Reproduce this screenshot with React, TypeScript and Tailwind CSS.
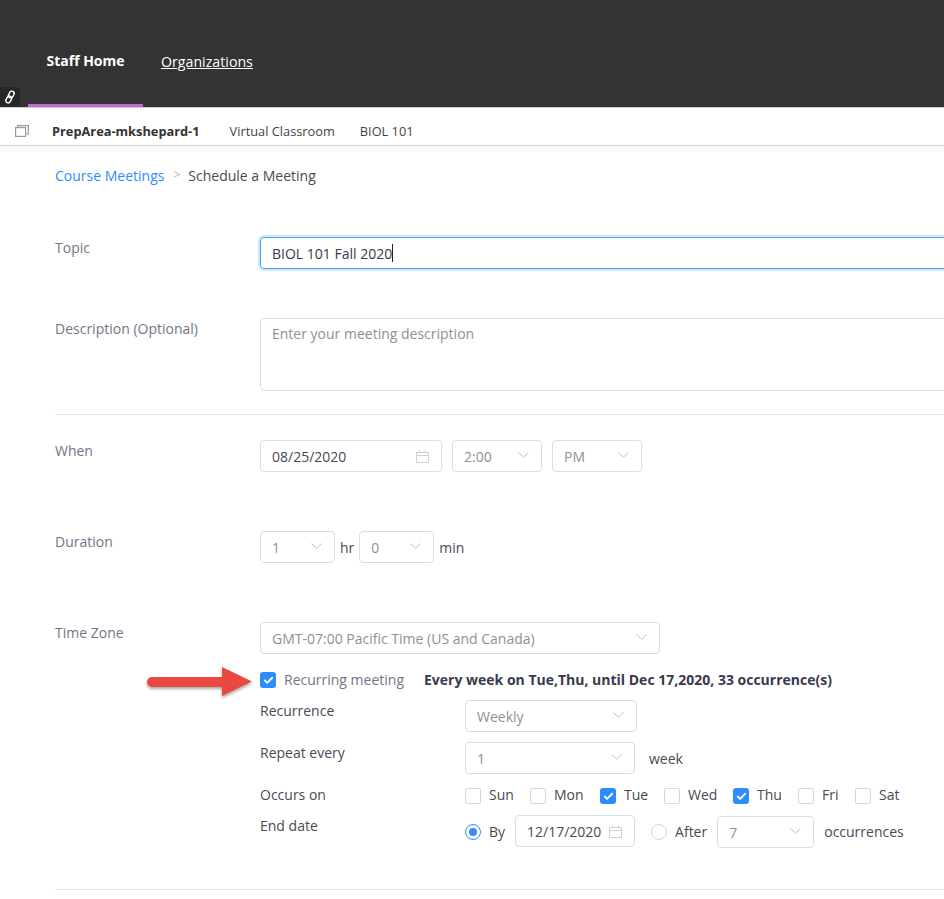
import React from 'react';
import { Check } from 'lucide-react';

const Calendar = () => (
  <svg width="13" height="13" viewBox="0 0 13 13" fill="none" stroke="#d0d0d6" strokeWidth="1" className="shrink-0">
    <rect x="0.5" y="2.5" width="12" height="10" />
    <path d="M0.5 5.5H12.5M3.5 0.5V3M9.5 0.5V3" />
  </svg>
);

const Chevron = () => (
  <svg width="11" height="6" viewBox="0 0 11 6" fill="none" stroke="#c0c0c8" strokeWidth="1" className="mb-[2px] shrink-0">
    <path d="M0.5 0.5L5.5 5.2L10.5 0.5" />
  </svg>
);

const Select = ({ value, className }: { value: string; className: string }) => (
  <div className={`flex h-8 shrink-0 items-center justify-between rounded border border-[#dcdce0] bg-white pl-[11px] pr-3 text-[14px] text-[#8f8f98] ${className}`}>
    <span>{value}</span>
    <Chevron />
  </div>
);

const Box = ({ checked }: { checked?: boolean }) =>
  checked ? (
    <span className="flex h-4 w-4 shrink-0 items-center justify-center rounded-[3px] bg-[#2d8cff]">
      <Check size={11} strokeWidth={4} className="text-white" />
    </span>
  ) : (
    <span className="h-4 w-4 shrink-0 rounded-[2px] border border-[#d8d8dc] bg-white" />
  );

const Day = ({ label, checked, className }: { label: string; checked?: boolean; className: string }) => (
  <div className={`flex shrink-0 items-center gap-2 ${className}`}>
    <Box checked={checked} />
    <span className="mb-[3px]">{label}</span>
  </div>
);

export default function App() {
  return (
    <div className="relative h-[899px] w-[944px] overflow-hidden bg-white text-[14px] text-[#4a4a55] [font-family:'Open_Sans',sans-serif]">
      <header className="relative h-[108px] border-b border-[#cfcfcf] bg-[#333333]">
        <nav className="flex h-[107px] items-end pl-7">
          <div className="flex h-[107px] w-[115px] items-center justify-center border-b-[3px] border-[#c667d8] pt-[16px] text-[14px] font-bold text-white">
            Staff Home
          </div>
          <a className="ml-[18px] flex h-[107px] items-center pt-[16px] text-[14.2px] text-white underline">Organizations</a>
        </nav>
        <div className="absolute bottom-0 left-0 flex h-5 w-5 items-center justify-center rounded-tr bg-[#262626]">
          <svg width="12" height="14" viewBox="0 0 12 14" fill="none" stroke="white" strokeWidth="1.5">
            <rect x="5" y="1" width="4.6" height="7" rx="2.3" transform="rotate(28 7.3 4.5)" />
            <rect x="2.4" y="6" width="4.6" height="7" rx="2.3" transform="rotate(28 4.7 9.5)" />
          </svg>
        </div>
      </header>

      <div className="flex h-[38px] items-center border-b border-[#d0d0d0] pl-[15px] text-[12.8px]">
        <svg width="14" height="12" viewBox="0 0 14 12" fill="none" stroke="#999999" strokeWidth="1.2" className="mt-[9px]">
          <rect x="0.6" y="2.6" width="10" height="8.8" />
          <path d="M2.6 2.6V0.6H13.4V9H10.6" />
        </svg>
        <span className="ml-[23px] pt-[10px] font-bold text-[#333]">PrepArea-mkshepard-1</span>
        <span className="ml-[30px] pt-[10px] text-[#444]">Virtual Classroom</span>
        <span className="ml-[25px] pt-[10px] text-[#444]">BIOL 101</span>
      </div>
      <div className="h-[6px] bg-[#f8f8f8]" />

      <main className="pl-[55px]">
        <div className="mt-[13px] flex h-5 items-center">
          <a className="text-[#2d8cff]">Course Meetings</a>
          <span className="ml-[9px] text-[12px] text-[#b5b5bb]">&gt;</span>
          <span className="ml-[8px]">Schedule a Meeting</span>
        </div>

        <div className="mt-[52px] flex">
          <label className="w-[205px] shrink-0 text-[#747487]">Topic</label>
          <div className="flex h-8 w-[800px] shrink-0 items-center rounded border border-[#4aa3ff] pl-[11px] text-[#39394d] ring-2 ring-[#cfe6ff]">
            BIOL 101 Fall 2020<span className="h-[18px] w-px bg-[#222]" />
          </div>
        </div>

        <div className="mt-[49px] flex">
          <label className="w-[205px] shrink-0 text-[#747487]">Description (Optional)</label>
          <div className="h-[73px] w-[800px] shrink-0 rounded border border-[#dcdce0] pl-[11px] pt-1 text-[#8f8f98]">
            Enter your meeting description
          </div>
        </div>

        <div className="mt-[23px] h-px bg-[#e4e4e8]" />

        <div className="mt-[25px] flex">
          <label className="w-[205px] shrink-0 text-[#747487]">When</label>
          <div className="flex gap-[10px]">
            <div className="flex h-8 w-[182px] items-center justify-between rounded border border-[#dcdce0] pl-[11px] pr-3 text-[#4a4a55]">
              <span>08/25/2020</span>
              <Calendar />
            </div>
            <Select value="2:00" className="w-[90px]" />
            <Select value="PM" className="w-[90px]" />
          </div>
        </div>

        <div className="mt-[59px] flex">
          <label className="w-[205px] shrink-0 text-[#747487]">Duration</label>
          <div className="flex items-center">
            <Select value="1" className="w-[75px]" />
            <span className="ml-[5px]">hr</span>
            <Select value="0" className="ml-[5px] w-[75px]" />
            <span className="ml-[5px]">min</span>
          </div>
        </div>

        <div className="mt-[59px] flex">
          <label className="w-[205px] shrink-0 text-[#747487]">Time Zone</label>
          <Select value="GMT-07:00 Pacific Time (US and Canada)" className="w-[400px]" />
        </div>

        <div className="ml-[205px] mt-[16px] flex h-5 items-center">
          <Box checked />
          <span className="mb-[2px] ml-2 text-[#747487]">Recurring meeting</span>
          <span className="mb-[2px] ml-5 font-bold text-[#39394d]">Every week on Tue,Thu, until Dec 17,2020, 33 occurrence(s)</span>
        </div>

        <div className="ml-[205px] mt-[10px] flex">
          <label className="w-[205px] shrink-0 pt-[1px] leading-[20px]">Recurrence</label>
          <Select value="Weekly" className="w-[172px]" />
        </div>

        <div className="ml-[205px] mt-[10px] flex">
          <label className="w-[205px] shrink-0 pt-[1px] leading-[20px]">Repeat every</label>
          <Select value="1" className="w-[170px]" />
          <span className="ml-[14px] flex items-center">week</span>
        </div>

        <div className="ml-[205px] mt-[12px] flex h-5 items-center">
          <label className="mb-[3px] w-[205px] shrink-0">Occurs on</label>
          <Day label="Sun" className="w-[65px]" />
          <Day label="Mon" className="w-[70px]" />
          <Day label="Tue" checked className="w-[64px]" />
          <Day label="Wed" className="w-[69px]" />
          <Day label="Thu" checked className="w-[65px]" />
          <Day label="Fri" className="w-[57px]" />
          <Day label="Sat" className="w-[50px]" />
        </div>

        <div className="ml-[205px] mt-[9px] flex">
          <label className="w-[205px] shrink-0">End date</label>
          <div className="flex items-center">
            <span className="flex h-4 w-4 items-center justify-center rounded-full border border-[#2d8cff]">
              <span className="h-2 w-2 rounded-full bg-[#2d8cff]" />
            </span>
            <span className="mb-[2px] ml-2">By</span>
            <div className="mb-[2px] ml-[10px] flex h-8 w-[120px] items-center justify-between rounded border border-[#dcdce0] pl-[11px] pr-3">
              <span>12/17/2020</span>
              <Calendar />
            </div>
            <span className="ml-4 h-4 w-4 rounded-full border border-[#d8d8dc]" />
            <span className="mb-[2px] ml-2">After</span>
            <Select value="7" className="ml-[10px] w-[97px]" />
            <span className="mb-[2px] ml-[10px]">occurrences</span>
          </div>
        </div>

        <div className="mt-[40px] h-px bg-[#e4e4e8]" />
      </main>

      {/* annotation arrow over the form */}
      <svg width="112" height="42" viewBox="0 0 112 42" className="absolute left-[144px] top-[662px]">
        <defs>
          <filter id="arrowShadow" x="-10%" y="-30%" width="120%" height="170%">
            <feDropShadow dx="0" dy="2" stdDeviation="1.5" floodColor="#000" floodOpacity="0.35" />
          </filter>
        </defs>
        <path d="M8 15H78V5L108 19.5L78 34V25H8A5 5 0 0 1 8 15Z" fill="#e8493f" filter="url(#arrowShadow)" />
      </svg>
    </div>
  );
}
